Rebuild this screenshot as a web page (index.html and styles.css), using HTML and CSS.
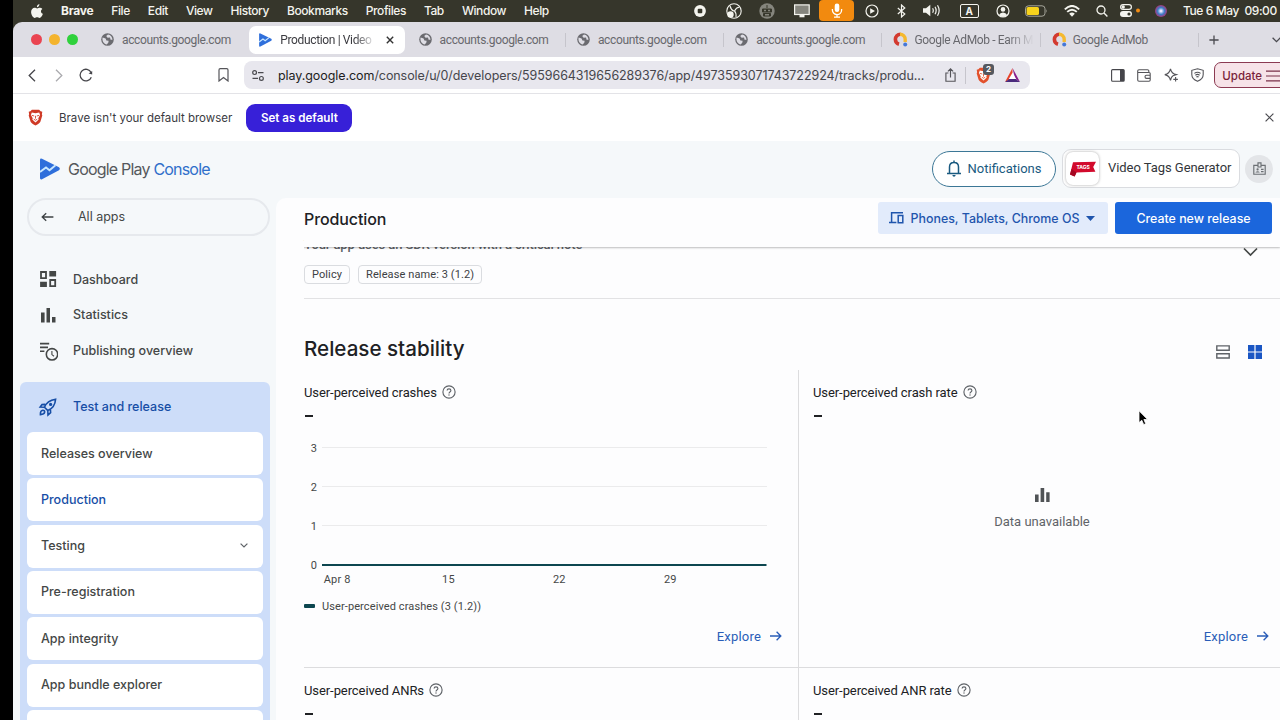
FILE: index.html
```html
<!DOCTYPE html>
<html lang="en">
<head>
    <meta charset="UTF-8">
    <title>Production | Video Tags Generator</title>
    <link rel="stylesheet" href="styles.css">
</head>
<body>
    <!-- Shared icons -->
    <svg class="defs" width="0" height="0">
        <symbol id="globe" viewBox="0 0 13 13">
            <circle cx="6.5" cy="6.5" r="6.3" fill="#6b6b70"/>
            <path d="M1.6 4.6 L4.6 5.6 L5.4 7.4 L7.6 7.8 L7.4 9.4 L5.8 11.6 C3 11.4 .8 8 1.6 4.6Z M7 1.4 L5.2 3 L6.6 4.8 L9 4.6 L9.6 6.8 L11.5 6.8 C11.4 4 9.7 1.8 7 1.4Z" fill="#dedde4"/>
        </symbol>
        <symbol id="admob" viewBox="0 0 15 15">
            <path d="M7.5 2.2 A5.2 5.2 0 0 0 2.4 7.5 A5 5 0 0 0 6 12.2" fill="none" stroke="#d33a2f" stroke-width="3.6"/>
            <path d="M7 2.3 A5.2 5.2 0 0 1 12.2 7.5 V10" fill="none" stroke="#f5b92e" stroke-width="3.4"/>
            <circle cx="12.2" cy="12.4" r="2" fill="#4578d6"/>
        </symbol>
        <symbol id="play" viewBox="0 0 20 22">
            <path d="M0 2 Q0 0 2 .7 L19 9.2 Q20.6 10.8 19 12.3 L2 21.3 Q0 22 0 20Z" fill="#2f6fdb"/>
            <path d="M0 14 L6 9.5 L9.5 12.2 L15.5 7.3" fill="none" stroke="#c9e8ff" stroke-width="1.9"/>
        </symbol>
        <symbol id="lion" viewBox="0 0 14 16">
            <path d="M3.6 .6 H10.4 L11.8 2.2 L13.4 2.6 L13 5 L13.4 6 L11.6 12 Q11 13.4 7 15.6 Q3 13.4 2.4 12 L.6 6 L1 5 L.6 2.6 L2.2 2.2Z" fill="currentColor"/>
            <path d="M3.5 3.4 L7 4 L10.5 3.4 L11.3 5.6 L9.6 8.6 L10 9.8 L7 12.8 L4 9.8 L4.4 8.6 L2.7 5.6Z" fill="#fff"/>
            <path d="M3.6 6 L5.8 6.6 M10.4 6 L8.2 6.6 M7 6.4 V9 M5.4 9.6 L7 10.6 L8.6 9.6" fill="none" stroke="currentColor" stroke-width=".8"/>
        </symbol>
        <symbol id="help" viewBox="0 0 14 14">
            <circle cx="7" cy="7" r="6.1" fill="none" stroke="#5f6368" stroke-width="1.15"/>
            <path d="M5.1 5.6 Q5.1 3.8 7 3.8 Q8.9 3.8 8.9 5.5 Q8.9 6.4 7.9 7 Q7 7.6 7 8.6" fill="none" stroke="#5f6368" stroke-width="1.15"/>
            <rect x="6.4" y="9.4" width="1.2" height="1.2" fill="#5f6368"/>
        </symbol>
        <symbol id="arrow" viewBox="0 0 12 10">
            <path d="M0 5 H10.6 M6.6 .8 L10.8 5 L6.6 9.2" fill="none" stroke="currentColor" stroke-width="1.35"/>
        </symbol>
    </svg>

    <div class="desktop">
        <div class="menubar">
            <svg class="apple" width="12" height="14" viewBox="0 0 12 14"><path d="M8.4 0 C8.5 1.8 7.4 3.1 5.9 3.2 C5.8 1.6 7 .3 8.4 0Z M11.4 4.9 C9.3 6.1 9.6 8.9 11.9 9.8 C11.3 11.6 10 13.9 8.5 13.9 C7.6 13.9 7.2 13.3 6.1 13.3 C5 13.3 4.6 13.9 3.7 13.9 C2 13.9 .1 10.8 .1 8.1 C.1 5.4 1.8 3.8 3.6 3.8 C4.7 3.8 5.4 4.4 6.2 4.4 C7 4.4 7.7 3.7 9 3.7 C9.9 3.7 10.8 4.1 11.4 4.9Z" fill="#f4f4ee"/></svg>
            <span class="app-name">Brave</span>
            <span>File</span>
            <span>Edit</span>
            <span>View</span>
            <span>History</span>
            <span>Bookmarks</span>
            <span>Profiles</span>
            <span>Tab</span>
            <span>Window</span>
            <span>Help</span>
            <div class="status">
                <i><svg width="12" height="12" viewBox="0 0 12 12"><circle cx="6" cy="6" r="5.9" fill="#f4f4ee"/><rect x="3.7" y="3.7" width="4.6" height="4.6" rx="1" fill="#36362b"/></svg></i>
                <i><svg width="16" height="16" viewBox="0 0 16 16"><g fill="none" stroke="#f4f4ee" stroke-width="1.1"><circle cx="8" cy="8" r="7.2"/><path d="M4 3 Q5 7 8 8 M13.5 4 Q10 4.5 8.5 8 Q10.5 10 10 14"/></g><circle cx="4.5" cy="11.5" r="3.2" fill="#f4f4ee"/></svg></i>
                <i><svg width="16" height="16" viewBox="0 0 16 16"><circle cx="8" cy="8" r="7.7" fill="#85857d"/><path d="M8 2 V5 M3.5 6 H12.5 V9 H3.5Z M4.5 10.5 H11.5 V13 H4.5Z" fill="#36362b" stroke="#36362b"/><path d="M5 7.5 H7 M9 7.5 H11 M6 11.8 H10" stroke="#85857d" stroke-width="1.4"/></svg></i>
                <i><svg width="16" height="14" viewBox="0 0 16 14"><rect x=".6" y=".9" width="14.6" height="9.6" fill="#85857d" stroke="#f4f4ee" stroke-width="1.2"/><path d="M5.5 11 H10.5 V13.3 H5.5Z" fill="#f4f4ee"/></svg></i>
                <i class="mic"><svg width="12" height="15" viewBox="0 0 12 15"><rect x="3.7" y=".5" width="4.6" height="8.5" rx="2.3" fill="#fff"/><path d="M1.4 6 V7 A4.6 4.6 0 0 0 10.6 7 V6 M6 11.6 V14 M3 14.2 H9" fill="none" stroke="#fff" stroke-width="1.3"/></svg></i>
                <i><svg width="14" height="14" viewBox="0 0 14 14"><circle cx="7" cy="7" r="6" fill="none" stroke="#f4f4ee" stroke-width="1.2"/><path d="M5.2 4.2 L10 7 L5.2 9.8Z" fill="#f4f4ee"/></svg></i>
                <i><svg width="9" height="14" viewBox="0 0 9 14"><path d="M.8 4 L7.8 10 L4.5 13 V1 L7.8 4 L.8 10" fill="none" stroke="#f4f4ee" stroke-width="1.2"/></svg></i>
                <i><svg width="18" height="13" viewBox="0 0 18 13"><path d="M0 4.3 H3 L7.3 .8 V12.2 L3 8.7 H0Z" fill="#f4f4ee"/><path d="M9.6 4.3 Q11 6.5 9.6 8.7 M12 2.8 Q14.3 6.5 12 10.2 M14.5 1.2 Q17.8 6.5 14.5 11.8" fill="none" stroke="#f4f4ee" stroke-width="1.2"/></svg></i>
                <i><b class="input-source">A</b></i>
                <i><svg width="14" height="14" viewBox="0 0 14 14"><circle cx="7" cy="7" r="6" fill="none" stroke="#f4f4ee" stroke-width="1.2"/><circle cx="7" cy="5.4" r="2.3" fill="#f4f4ee"/><path d="M3 11 Q4 8.4 7 8.4 Q10 8.4 11 11 Q9 13 7 13 Q5 13 3 11Z" fill="#f4f4ee"/></svg></i>
                <i><svg width="23" height="12" viewBox="0 0 23 12"><rect x=".5" y=".8" width="19.5" height="10.4" rx="3" fill="none" stroke="#a5a59b"/><rect x="1.6" y="2" width="12.4" height="8" rx="1.6" fill="#f7d21c"/><path d="M21.2 4.2 Q22.6 6 21.2 7.8Z" fill="#a5a59b"/></svg></i>
                <i><svg width="16" height="12" viewBox="0 0 16 12"><path d="M.8 4.4 Q8 -2.6 15.2 4.4 M3.2 6.9 Q8 2.4 12.8 6.9" fill="none" stroke="#f4f4ee" stroke-width="1.9"/><path d="M5.2 8.8 Q8 6.4 10.8 8.8 L8 11.7Z" fill="#f4f4ee"/></svg></i>
                <i><svg width="12" height="12" viewBox="0 0 12 12"><circle cx="5" cy="5" r="4" fill="none" stroke="#f4f4ee" stroke-width="1.3"/><path d="M8 8 L11.4 11.4" stroke="#f4f4ee" stroke-width="1.4"/></svg></i>
                <i><svg width="20" height="13" viewBox="0 0 20 13"><rect x=".6" y=".6" width="10.8" height="4.8" rx="2.4" fill="none" stroke="#f4f4ee" stroke-width="1.2"/><circle cx="3.2" cy="3" r="1.7" fill="#f4f4ee"/><rect x="0" y="7" width="12" height="6" rx="3" fill="#f4f4ee"/><circle cx="9" cy="10" r="1.6" fill="#36362b"/><circle cx="18" cy="6.5" r="2" fill="#f28c13"/></svg></i>
                <i class="siri"></i>
                <span class="clock">Tue 6 May&nbsp; 09:00</span>
            </div>
        </div>

        <div class="tabstrip">
            <div class="lights"><i class="red"></i><i class="yellow"></i><i class="green"></i></div>
            <div class="tab"><svg width="13" height="13"><use href="#globe"/></svg><span>accounts.google.com</span></div>
            <div class="tab active"><svg width="13" height="14"><use href="#play"/></svg><span class="fade">Production | Video</span><svg class="close" width="8" height="8" viewBox="0 0 8 8"><path d="M.8 .8 L7.2 7.2 M7.2 .8 L.8 7.2" stroke="#333" stroke-width="1.4"/></svg></div>
            <div class="tab line"><svg width="13" height="13"><use href="#globe"/></svg><span>accounts.google.com</span></div>
            <div class="tab line"><svg width="13" height="13"><use href="#globe"/></svg><span>accounts.google.com</span></div>
            <div class="tab line"><svg width="13" height="13"><use href="#globe"/></svg><span>accounts.google.com</span></div>
            <div class="tab line"><svg width="15" height="15"><use href="#admob"/></svg><span class="fade">Google AdMob - Earn M</span></div>
            <div class="tab line"><svg width="15" height="15"><use href="#admob"/></svg><span>Google AdMob</span></div>
            <svg class="new-tab" width="10" height="10" viewBox="0 0 10 10"><path d="M5 .4 V9.6 M.4 5 H9.6" stroke="#4a4a4f" stroke-width="1.3"/></svg>
            <svg class="tab-menu" width="9" height="6" viewBox="0 0 9 6"><path d="M.6 .8 L4.5 4.7 L8.4 .8" fill="none" stroke="#4a4a4f" stroke-width="1.3"/></svg>
        </div>

        <div class="toolbar">
            <div class="nav">
                <svg width="8" height="13" viewBox="0 0 8 13"><path d="M7 .8 L1.2 6.5 L7 12.2" fill="none" stroke="#45454a" stroke-width="1.3"/></svg>
                <svg width="8" height="13" viewBox="0 0 8 13"><path d="M1 .8 L6.8 6.5 L1 12.2" fill="none" stroke="#aaaaae" stroke-width="1.3"/></svg>
                <svg width="14" height="14" viewBox="0 0 14 14"><path d="M12.1 4.5 A5.8 5.8 0 1 0 12.3 9.2" fill="none" stroke="#45454a" stroke-width="1.3"/><path d="M13.2 3 L13.2 6.6 L9.6 5.6Z" fill="#45454a"/></svg>
            </div>
            <svg class="bookmark" width="11" height="14" viewBox="0 0 11 14"><path d="M1 2 Q1 .7 2.3 .7 H8.7 Q10 .7 10 2 V13 L5.5 9.5 L1 13Z" fill="none" stroke="#55555a" stroke-width="1.2"/></svg>
            <div class="urlbar">
                <svg width="12" height="11" viewBox="0 0 12 11"><g fill="none" stroke="#4a4a4f" stroke-width="1.2"><circle cx="2.6" cy="2.6" r="1.9"/><circle cx="9.4" cy="8.4" r="1.9"/><path d="M6 2.6 H11.5 M.5 8.4 H6"/></g></svg>
                <span class="url">play.google.com<em>/console/u/0/developers/5959664319656289376/app/4973593071743722924/tracks/produ...</em></span>
                <svg class="share" width="11" height="14" viewBox="0 0 11 14"><path d="M3.4 5 H.9 V13.2 H10.1 V5 H7.6 M5.5 9.5 V1 M2.9 3.4 L5.5 .9 L8.1 3.4" fill="none" stroke="#55555a" stroke-width="1.15"/></svg>
                <div class="shield">
                    <svg class="lion" width="15" height="17"><use href="#lion"/></svg>
                    <b>2</b>
                </div>
                <svg class="bat" width="15" height="14" viewBox="0 0 15 14"><path d="M7.5 0 L0 14 L7.5 9.5Z" fill="#e8452c"/><path d="M7.5 0 L15 14 L10 10.5Z" fill="#8a1f8c"/><path d="M0 14 H15 L10.8 11 H4.2Z" fill="#4a2a7c"/><path d="M7.5 4.8 L3.8 11 H11.2Z" fill="#fff"/></svg>
            </div>
            <div class="extensions">
                <svg width="14" height="13" viewBox="0 0 14 13"><rect x=".6" y=".6" width="12.6" height="11.6" rx="1" fill="none" stroke="#45454a" stroke-width="1.1"/><rect x="9" y="1" width="4" height="11" fill="#45454a"/></svg>
                <svg width="14" height="13" viewBox="0 0 14 13"><path d="M11.8 3.5 V1.8 Q11.8 .7 10.5 .7 H2 Q.7 .7 .7 2 V11 Q.7 12.2 2 12.2 H12 Q13.2 12.2 13.2 11 V4.6 Q13.2 3.5 12 3.5 H1 M13 6.2 H9.5 Q8 6.2 8 7.7 Q8 9.4 9.5 9.4 H13" fill="none" stroke="#55555a" stroke-width="1.1"/></svg>
                <svg width="15" height="14" viewBox="0 0 15 14"><path d="M6.5 .8 Q7.4 5.6 12.4 6.6 L9 7.8 Q7.2 8.8 6.5 12.4 Q5.5 7.6 .8 6.6 Q5.5 5.6 6.5 .8Z M11.6 9 V13.6 M9.3 11.3 H13.9" fill="none" stroke="#55555a" stroke-width="1.15"/></svg>
                <svg width="13" height="14" viewBox="0 0 13 14"><path d="M6.5 .7 L12.2 2.3 V6.5 Q12.2 11 6.5 13.3 Q.8 11 .8 6.5 V2.3Z M3.4 5.4 Q6.5 3 9.6 5.4 M4.4 7.2 Q6.5 5.6 8.6 7.2 M5.4 9 Q6.5 8.2 7.6 9" fill="none" stroke="#55555a" stroke-width="1.1"/></svg>
            </div>
            <div class="update">Update<svg width="15" height="12" viewBox="0 0 15 12"><path d="M0 1.2 H15 M0 6 H15 M0 10.8 H15" stroke="#7a3048" stroke-width="1.2"/></svg></div>
        </div>

        <div class="infobar">
            <svg class="lion" width="15" height="17"><use href="#lion"/></svg>
            <span>Brave isn't your default browser</span>
            <button class="set-default">Set as default</button>
            <svg class="dismiss" width="9" height="9" viewBox="0 0 9 9"><path d="M.6 .6 L8.4 8.4 M8.4 .6 L.6 8.4" stroke="#4a4a4f" stroke-width="1.2"/></svg>
        </div>

        <div class="page">
            <div class="topbar">
                <svg width="20" height="22"><use href="#play"/></svg>
                <span class="logo-text">Google Play <em>Console</em></span>
                <button class="notifications">
                    <svg width="14" height="17" viewBox="0 0 14 17"><path d="M2.5 13.2 V7 Q2.5 2.6 7 2.6 Q11.5 2.6 11.5 7 V13.2 M0 13.6 H14 M7 .4 V2.6" fill="none" stroke="#1a5a80" stroke-width="1.5"/><path d="M5.3 15 H8.7 Q8.4 16.7 7 16.7 Q5.6 16.7 5.3 15Z" fill="#1a5a80"/></svg>
                    Notifications
                </button>
                <div class="app-card">
                    <div class="app-icon">
                        <svg width="26" height="16" viewBox="0 0 26 16"><path d="M3 1.2 L26 .8 L23.2 6 L25.4 10.8 L6.5 11.4 L4.6 15.6 L0 13.4Z" fill="#d20a2c"/><path d="M0 13.4 L1.5 8 L6.5 11.4 L4.6 15.6Z" fill="#a30822"/><text x="6.4" y="8" font-size="5" font-weight="700" fill="#fff" font-family="Inter, sans-serif">TAGS</text></svg>
                    </div>
                    <span>Video Tags Generator</span>
                </div>
                <div class="badge">
                    <svg width="13" height="13" viewBox="0 0 13 13"><path d="M4.8 3.4 H.8 V12.2 H12.2 V3.4 H8.2 M5 .8 H8 V5 H5Z M8 7.3 H10.6 M8 9.6 H10.6" fill="none" stroke="#6b6f73" stroke-width="1.15"/><circle cx="4.6" cy="7.4" r="1.1" fill="#6b6f73"/><path d="M2.4 10.6 Q4.6 8 6.8 10.6Z" fill="#6b6f73"/></svg>
                </div>
            </div>

            <div class="columns">
                <div class="sidebar">
                    <div class="all-apps">
                        <svg width="13" height="10" viewBox="0 0 13 10"><path d="M12.4 5 H1.4 M5.2 1.2 L1.2 5 L5.2 8.8" fill="none" stroke="#3c4043" stroke-width="1.3"/></svg>
                        <span>All apps</span>
                    </div>
                    <div class="nav-list">
                        <div class="nav-item">
                            <svg width="20" height="20" viewBox="0 0 20 20"><path d="M3 3 H8 V9.2 H3Z M12.2 11 H17.2 V17.1 H12.2Z" fill="none" stroke="#444746" stroke-width="1.8"/><path d="M11.3 2.1 H18.1 V7.4 H11.3Z M2.1 12.7 H8.9 V18 H2.1Z" fill="#444746"/></svg>
                            <span>Dashboard</span>
                        </div>
                        <div class="nav-item">
                            <svg width="20" height="20" viewBox="0 0 20 20"><path d="M3 7.5 H6.6 V17.5 H3Z M8.5 3 H12 V17.5 H8.5Z M14 12 H17.5 V17.5 H14Z" fill="#444746"/></svg>
                            <span>Statistics</span>
                        </div>
                        <div class="nav-item">
                            <svg width="20" height="20" viewBox="0 0 20 20"><g fill="none" stroke="#444746" stroke-width="1.6"><path d="M2 2.6 H11.2 M2 6.4 H10 M2 10.2 H6.4"/><circle cx="14" cy="13.3" r="5.7"/></g><path d="M13.9 10 V13.6 L16 15.2" fill="none" stroke="#444746" stroke-width="1.1"/></svg>
                            <span>Publishing overview</span>
                        </div>
                    </div>
                    <div class="group">
                        <div class="nav-item group-title">
                            <svg width="20" height="20" viewBox="0 0 20 20"><g fill="none" stroke="#174ea6" stroke-width="1.6"><path d="M6.5 10.2 Q9 3.5 17.6 2.2 Q17 10.5 9.8 13.6Z M7.2 7.4 L4 7.6 L2.2 10 L6.5 10.2 M12.4 12 L12.6 15.6 L10 18 L9.8 13.6"/><path d="M2.4 17.6 Q2.2 13.4 4.8 13.2 Q7 13.4 6.6 15.4 Q6.2 17.4 2.4 17.6Z"/></g><circle cx="12.6" cy="7.4" r="1.6" fill="#174ea6"/></svg>
                            <span>Test and release</span>
                        </div>
                        <div class="sub-item">Releases overview</div>
                        <div class="sub-item selected">Production</div>
                        <div class="sub-item">Testing <svg width="8" height="5" viewBox="0 0 8 5"><path d="M.6 .6 L4 4 L7.4 .6" fill="none" stroke="#5f6368" stroke-width="1.2"/></svg></div>
                        <div class="sub-item">Pre-registration</div>
                        <div class="sub-item">App integrity</div>
                        <div class="sub-item">App bundle explorer</div>
                        <div class="sub-item"></div>
                    </div>
                </div>

                <div class="main">
                    <div class="main-header">
                        <span class="page-title">Production</span>
                        <button class="form-factor">
                            <svg width="15" height="12" viewBox="0 0 15 12"><path d="M14 .8 H2.6 V9.8 M0 10.4 H7.4 M9.2 3.6 H13.8 V10.8 H9.2Z" fill="none" stroke="#1f55ad" stroke-width="1.5"/></svg>
                            <span>Phones, Tablets, Chrome OS</span>
                            <svg width="9" height="5" viewBox="0 0 9 5"><path d="M0 0 H9 L4.5 5Z" fill="#1f55ad"/></svg>
                        </button>
                        <button class="create">Create new release</button>
                    </div>

                    <div class="issue">
                        <div class="issue-head">
                            <span>Your app uses an SDK version with a critical note</span>
                            <svg width="15" height="10" viewBox="0 0 15 10"><path d="M1 1.5 L7.5 8 L14 1.5" fill="none" stroke="#444746" stroke-width="1.7"/></svg>
                        </div>
                        <div class="chips">
                            <span class="chip">Policy</span>
                            <span class="chip">Release name: 3 (1.2)</span>
                        </div>
                    </div>

                    <div class="section-head">
                        <h2>Release stability</h2>
                        <svg width="14" height="14" viewBox="0 0 14 14"><path d="M.8 .9 H13.2 V5.2 H.8Z M.8 8.7 H13.2 V13 H.8Z" fill="none" stroke="#5f6368" stroke-width="1.4"/></svg>
                        <svg width="14" height="14" viewBox="0 0 14 14"><path d="M0 0 H6.4 V6.4 H0Z M7.6 0 H14 V6.4 H7.6Z M0 7.6 H6.4 V14 H0Z M7.6 7.6 H14 V14 H7.6Z" fill="#1a56c4"/></svg>
                    </div>

                    <div class="cards">
                        <div class="card">
                            <div class="card-title">User-perceived crashes <svg width="14" height="14"><use href="#help"/></svg></div>
                            <div class="value"></div>
                            <svg class="chart" width="480" height="154" viewBox="0 0 480 154">
                                <path d="M18 13.5 H463 M18 52.5 H463 M18 91.5 H463" stroke="#ebebec" stroke-width="1.2"/>
                                <path d="M18 131 H462.5" stroke="#0d4750" stroke-width="2"/>
                                <g><text x="10" y="17.5">3</text><text x="10" y="56.7">2</text><text x="10" y="95.9">1</text><text x="10" y="135">0</text></g>
                                <g><text x="33.2" y="149">Apr 8</text><text x="144.5" y="149">15</text><text x="255.3" y="149">22</text><text x="366.3" y="149">29</text></g>
                            </svg>
                            <div class="legend"><i></i>User-perceived crashes (3 (1.2))</div>
                            <div class="explore">Explore <svg width="12" height="10"><use href="#arrow"/></svg></div>
                        </div>
                        <div class="card">
                            <div class="card-title">User-perceived crash rate <svg width="14" height="14"><use href="#help"/></svg></div>
                            <div class="value"></div>
                            <div class="empty">
                                <svg width="15" height="14" viewBox="0 0 15 14"><path d="M0 6.5 H3.6 V14 H0Z M5.6 0 H9.2 V14 H5.6Z M11.2 4.3 H14.6 V14 H11.2Z" fill="#505356"/></svg>
                                <span>Data unavailable</span>
                            </div>
                            <div class="explore">Explore <svg width="12" height="10"><use href="#arrow"/></svg></div>
                        </div>
                        <div class="card">
                            <div class="card-title">User-perceived ANRs <svg width="14" height="14"><use href="#help"/></svg></div>
                            <div class="value"></div>
                        </div>
                        <div class="card">
                            <div class="card-title">User-perceived ANR rate <svg width="14" height="14"><use href="#help"/></svg></div>
                            <div class="value"></div>
                        </div>
                    </div>
                </div>
            </div>
        </div>
    </div>

    <svg class="cursor" width="11" height="16" viewBox="0 0 11 16"><path d="M1 .8 V12.6 L3.8 10.2 L5.7 14.6 L7.7 13.7 L5.9 9.5 H9.6Z" fill="#000" stroke="#fff" stroke-width=".8"/></svg>
</body>
</html>
```
FILE: styles.css
```css
* {
    box-sizing: border-box;
}

body {
    margin: 0;
    background-color: #000;
    font-family: Inter, "Liberation Sans", sans-serif;
    width: 1280px;
    height: 720px;
    overflow: hidden;
}

svg {
    display: block;
    flex: none;
}

em, i {
    font-style: normal;
}

button {
    font-family: inherit;
    border: 0;
    padding: 0;
    display: flex;
    align-items: center;
    justify-content: center;
    flex: none;
}

span {
    white-space: nowrap;
}

.defs {
    position: absolute;
}

.desktop {
    margin-left: 13px;
    height: 720px;
    overflow: hidden;
    background-color: #36362b;
    display: flex;
    flex-direction: column;
}

/* macOS menu bar */
.menubar {
    height: 22px;
    flex: none;
    display: flex;
    align-items: center;
    gap: 18px;
    padding: 0 0 1px 18px;
    color: #f4f4ee;
    font-size: 12px;
    font-weight: 500;
    letter-spacing: -0.42px;
}

.app-name {
    font-weight: 700;
    letter-spacing: -0.25px;
}

.status {
    flex: none;
    display: grid;
    grid-template-columns: 34px 33px 34px 35px 35px 36px 22px 40px 34px 34px 32px 40px 20px 36px 26px auto;
    align-items: center;
    margin-left: auto;
    width: 597px;
}

.status i {
    display: flex;
    justify-content: center;
    align-items: center;
}

.status .mic {
    background-color: #f28a0f;
    height: 21px;
    border-radius: 4px;
}

.input-source {
    width: 19px;
    height: 14px;
    border: 1px solid #f4f4ee;
    border-radius: 2px;
    font-size: 10px;
    line-height: 12px;
    text-align: center;
}

.status .siri {
    width: 12px;
    height: 12px;
    margin: 0 7px;
    border-radius: 50%;
    background: radial-gradient(circle, #e8e8ff 8%, #3a7ec8 40%, #a23a7c 70%, #222 100%);
}

.clock {
    padding-left: 9px;
}

/* Browser tabs */
.tabstrip {
    height: 35px;
    flex: none;
    display: flex;
    align-items: center;
    background-color: #dedde4;
    border-top-left-radius: 9px;
    font-family: Roboto, sans-serif;
    font-size: 12px;
    letter-spacing: -0.36px;
    color: #68686d;
}

.lights {
    display: flex;
    gap: 7px;
    width: 78px;
    padding-left: 18px;
    flex: none;
}

.lights i {
    width: 11px;
    height: 11px;
    border-radius: 50%;
}

.lights .red { background-color: #ea4451; }
.lights .yellow { background-color: #f4b42e; }
.lights .green { background-color: #2fd13c; }

.tab {
    width: 158.3px;
    height: 28px;
    flex: none;
    display: flex;
    align-items: center;
    padding-left: 10px;
    position: relative;
}

.tab span {
    margin-left: 8px;
}

.tab svg[width="15"] + span {
    margin-left: 6px;
}

.tab.line::after {
    content: "";
    position: absolute;
    right: 1px;
    top: 7px;
    width: 1px;
    height: 14px;
    background-color: #c6c5cc;
}

.tab.active {
    width: 156px;
    margin-right: 3.3px;
    background-color: #fff;
    border-radius: 7px;
    color: #3a3a3f;
}

.tab .fade {
    width: 96px;
    -webkit-mask-image: linear-gradient(to right, #000 78%, transparent);
    mask-image: linear-gradient(to right, #000 78%, transparent);
}

.tab.line .fade {
    width: 120px;
}

.tab .close {
    margin-left: 10px;
}

.new-tab {
    margin-left: 9px;
}

.tab-menu {
    margin-left: 53px;
}

/* Toolbar */
.toolbar {
    height: 37px;
    flex: none;
    display: flex;
    align-items: center;
    background-color: #fff;
    border-bottom: 1px solid #e3e3e7;
}

.nav {
    display: flex;
    align-items: center;
    padding-left: 15px;
    gap: 19px;
}

.nav svg:last-child {
    margin-left: -3px;
}

.bookmark {
    margin-left: 125px;
}

.urlbar {
    width: 786px;
    height: 28px;
    margin-left: 15px;
    padding-left: 8px;
    border-radius: 8px;
    background-color: #e8e7ee;
    display: flex;
    align-items: center;
    flex: none;
}

.url {
    width: 646px;
    margin-left: 14px;
    font-size: 12.5px;
    letter-spacing: -0.07px;
    color: #1d1d22;
}

.url em {
    color: #46464c;
}

.share {
    margin-left: 21px;
}

.shield {
    position: relative;
    margin-left: 9px;
    padding-left: 10px;
    border-left: 1px solid #c6c5cc;
    color: #e2512c;
}

.shield b {
    position: absolute;
    left: 17px;
    top: -3px;
    width: 11px;
    height: 11px;
    border-radius: 3px;
    background-color: #55585f;
    color: #fff;
    font-size: 8px;
    line-height: 11px;
    text-align: center;
}

.bat {
    margin-left: 14px;
}

.extensions {
    display: flex;
    gap: 12.6px;
    margin-left: 80.5px;
    align-items: center;
}

.update {
    display: flex;
    align-items: center;
    flex: none;
    gap: 4px;
    width: 80px;
    height: 26px;
    margin-left: 10px;
    padding: 1px 0 0 7px;
    border: 1px solid #8c3a52;
    border-radius: 7px;
    background-color: #f7e3e8;
    color: #7a1f3a;
    font-size: 11.5px;
    font-weight: 500;
}

/* Default browser bar */
.infobar {
    height: 47px;
    flex: none;
    display: flex;
    align-items: center;
    padding-left: 15px;
    background-color: #fff;
    font-size: 11.5px;
    color: #3a3a3f;
}

.infobar .lion {
    color: #cf3a26;
    margin-right: 16px;
}

.set-default {
    width: 106px;
    height: 28px;
    margin-left: 14px;
    border-radius: 9px;
    background-color: #3720d8;
    color: #fff;
    font-size: 11.6px;
    font-weight: 600;
}

.dismiss {
    margin-left: auto;
    margin-right: 6px;
}

/* Play Console */
.page {
    flex: 1;
    min-height: 0;
    background-color: #f5f8fa;
    display: flex;
    flex-direction: column;
}

.topbar {
    height: 57px;
    flex: none;
    display: flex;
    align-items: center;
    padding: 0 0 2px 27px;
}

.logo-text {
    margin-left: 8px;
    font-size: 16px;
    letter-spacing: -0.8px;
    color: #55585c;
}

.logo-text em {
    color: #2f6fca;
}

.notifications {
    width: 124px;
    height: 36px;
    margin-left: auto;
    gap: 7px;
    border: 1px solid #3c7796;
    border-radius: 18px;
    background-color: #fff;
    color: #1a5a80;
    font-family: Roboto, sans-serif;
    font-size: 13px;
}

.app-card {
    width: 178px;
    height: 39px;
    margin-left: 6px;
    padding-left: 3px;
    border: 1px solid #dadce0;
    border-radius: 9px;
    background-color: #fff;
    display: flex;
    align-items: center;
    font-family: Roboto, sans-serif;
    font-size: 13px;
    letter-spacing: -0.05px;
    color: #33363a;
}

.app-card span {
    margin: -3px 0 0 9px;
}

.app-icon {
    width: 33px;
    height: 33px;
    border-radius: 7px;
    box-shadow: 0 0 3px rgba(0, 0, 0, 0.35);
    display: flex;
    align-items: center;
    justify-content: center;
}

.badge {
    width: 28px;
    height: 28px;
    margin: 0 7px 0 5px;
    border-radius: 50%;
    background-color: #e3e5e8;
    display: flex;
    align-items: center;
    justify-content: center;
}

.columns {
    flex: 1;
    min-height: 0;
    display: flex;
}

/* Sidebar */
.sidebar {
    width: 263px;
    flex: none;
    font-size: 12.5px;
    font-weight: 500;
    color: #444746;
}

.all-apps {
    width: 243px;
    height: 38px;
    margin-left: 14px;
    padding: 0 0 1px 12px;
    border: 2px solid #e6e9ed;
    border-radius: 19px;
    display: flex;
    align-items: center;
    font-weight: 400;
}

.all-apps span {
    margin-left: 24px;
}

.nav-list {
    padding: 25.6px 0 13.4px 25px;
}

.nav-item {
    height: 35.6px;
    display: flex;
    align-items: center;
    gap: 15px;
}

.group {
    width: 250px;
    margin-left: 7px;
    padding: 0 7px;
    border-radius: 6px;
    background-color: #cdddf9;
    display: flex;
    flex-direction: column;
    gap: 3.3px;
}

.group-title {
    height: 47px;
    padding: 3px 0 0 11px;
    color: #174ea6;
}

.sub-item {
    height: 43px;
    flex: none;
    padding: 0 15px 1px 14px;
    border-radius: 6px;
    background-color: #fff;
    display: flex;
    align-items: center;
    justify-content: space-between;
}

.sub-item.selected {
    color: #174ea6;
}

/* Main panel */
.main {
    flex: 1;
    min-width: 0;
    background-color: #fdfdfe;
    border-top-left-radius: 10px;
    font-family: Roboto, sans-serif;
    color: #202124;
}

.main-header {
    height: 49px;
    display: flex;
    align-items: center;
    padding: 0 8px 9px 28px;
    background-color: #fdfdfe;
    border-top-left-radius: 10px;
    box-shadow: 0 1px 2px rgba(0, 0, 0, 0.25);
    clip-path: inset(0 0 -4px 28px);
    position: relative;
    z-index: 1;
    font-family: Inter, sans-serif;
}

.page-title {
    flex: 1;
    padding-top: 1px;
    font-size: 16px;
    font-weight: 500;
    letter-spacing: -0.1px;
}

.form-factor {
    width: 230px;
    height: 32px;
    margin-right: 7px;
    border-radius: 3px;
    background-color: #e2ebfb;
    color: #1f55ad;
    gap: 7px;
    padding-right: 2px;
    font-size: 12.4px;
    font-weight: 500;
}

.create {
    width: 157px;
    height: 32px;
    border-radius: 3px;
    background-color: #1b66dc;
    color: #fff;
    font-size: 12.4px;
    font-weight: 500;
}

.issue {
    display: flow-root;
    margin-left: 28px;
    height: 52px;
    border-bottom: 1px solid #e2e2e4;
}

.issue-head {
    display: flex;
    justify-content: space-between;
    align-items: center;
    height: 20px;
    margin-top: -13px;
    padding-right: 22px;
    font-size: 13px;
    font-weight: 500;
    letter-spacing: -0.1px;
    color: #5f6368;
}

.issue-head svg {
    margin-top: 15px;
}

.chips {
    display: flex;
    gap: 8px;
    margin-top: 11px;
}

.chip {
    height: 19px;
    padding: 0 7px;
    border: 1px solid #dadce0;
    border-radius: 4px;
    font-size: 11px;
    line-height: 17px;
    letter-spacing: 0.1px;
    color: #3c4043;
}

.section-head {
    display: flex;
    align-items: center;
    height: 71px;
    padding: 34px 18px 0 28px;
}

.section-head h2 {
    flex: 1;
    margin: -7px 0 0;
    font-family: Inter, sans-serif;
    font-size: 20.6px;
    font-weight: 500;
}

.section-head svg:last-child {
    margin-left: 18px;
}

.cards {
    display: grid;
    grid-template-columns: 494px 1fr;
    grid-template-rows: 298px 80px;
    margin-left: 28px;
}

.card {
    padding: 13px 0 0 14px;
    border-left: 1px solid #dcdcde;
    border-bottom: 1px solid #dcdcde;
}

.card:nth-child(odd) {
    padding-left: 0;
    border-left: 0;
}

.card-title {
    display: flex;
    align-items: center;
    gap: 5px;
    height: 18px;
    font-size: 13px;
    letter-spacing: -0.08px;
}

.value {
    width: 8px;
    height: 2px;
    margin: 14px 0 0 1px;
    background-color: #202124;
}

.chart {
    margin-top: 17px;
}

.chart text {
    font-size: 11px;
    letter-spacing: 0.2px;
    fill: #444746;
    text-anchor: middle;
}

.legend {
    display: flex;
    align-items: center;
    gap: 7px;
    height: 16px;
    margin-top: 10px;
    font-size: 11px;
    letter-spacing: 0.1px;
    color: #444746;
}

.legend i {
    width: 11px;
    height: 4px;
    border-radius: 1px;
    background-color: #0d4750;
}

.explore {
    display: flex;
    align-items: center;
    justify-content: flex-end;
    gap: 9px;
    height: 18px;
    margin-top: 13px;
    padding-right: 16px;
    color: #2a5db8;
    font-size: 13px;
    letter-spacing: 0.2px;
}

.card:nth-child(2) .explore {
    padding-right: 11px;
}

.empty {
    height: 197px;
    display: flex;
    flex-direction: column;
    align-items: center;
    padding-top: 71px;
    padding-right: 9px;
    gap: 12px;
    font-size: 13px;
    color: #5f6368;
}

.cursor {
    position: absolute;
    left: 1138px;
    top: 410px;
}
```
